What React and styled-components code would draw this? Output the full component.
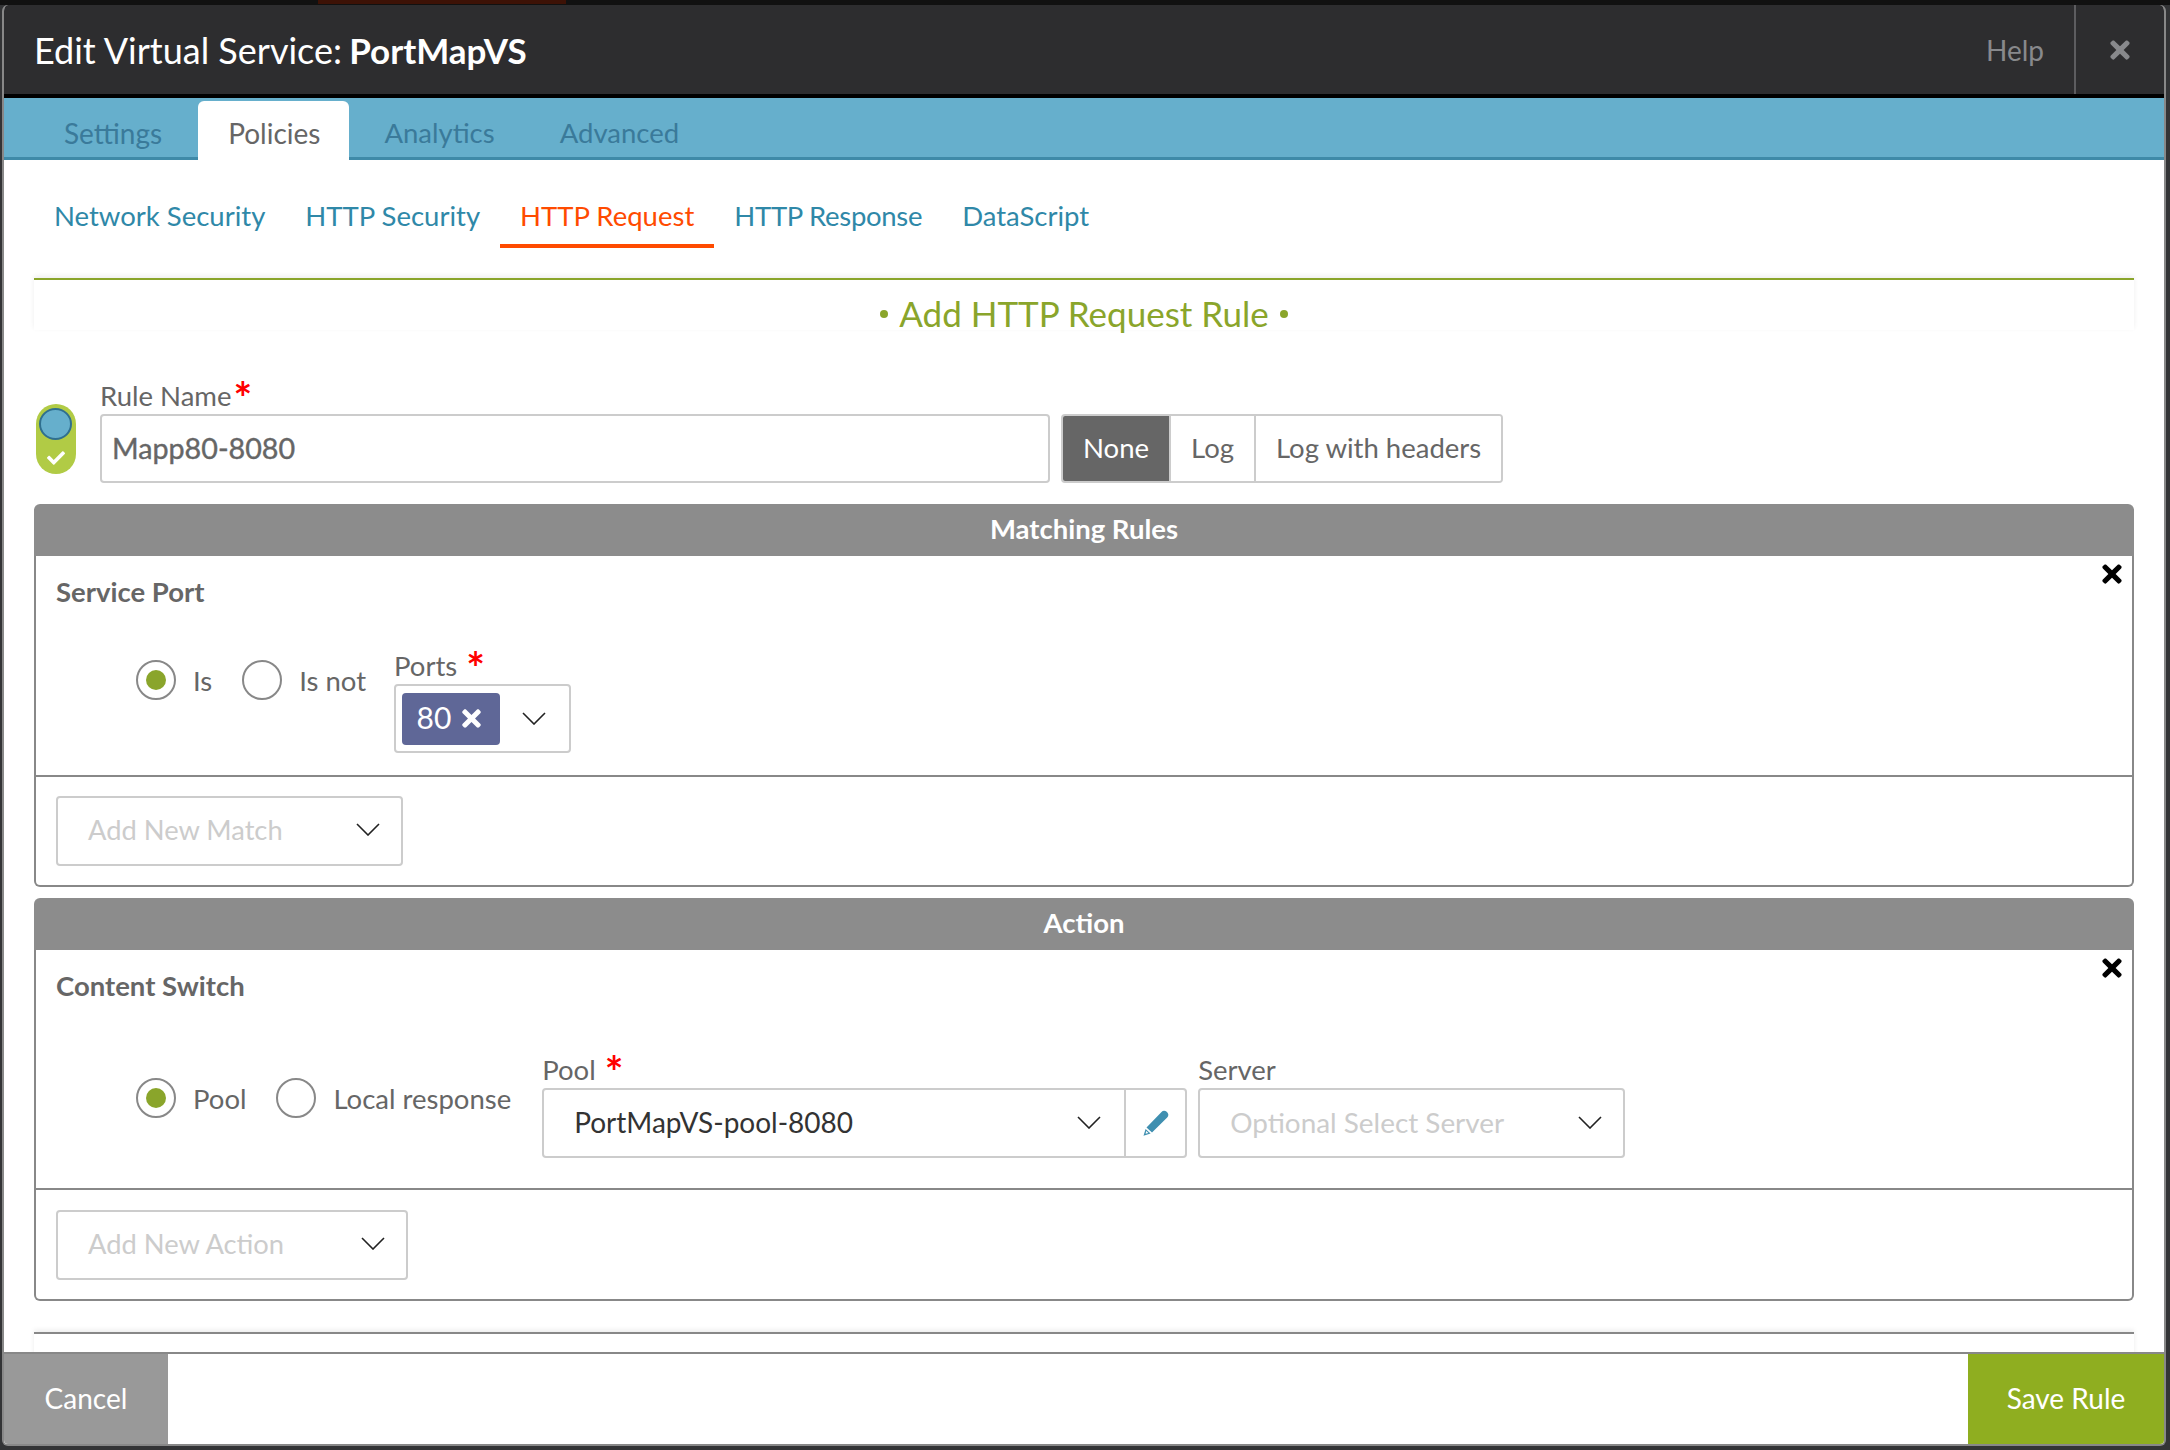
import React from 'react';
import styled, { createGlobalStyle } from 'styled-components';
import { FaTimes, FaCheck } from 'react-icons/fa';

const Global = createGlobalStyle`
  html, body { margin: 0; padding: 0; background: #333436; }
  * { box-sizing: border-box; }
  body { font-family: Lato, "Liberation Sans", sans-serif; color: #666; }
`;

const Page = styled.div`
  width: 2170px; height: 1450px; overflow: hidden; background: #333436;
`;
const TopStrip = styled.div`
  height: 5px; background: #111; padding-left: 318px;
`;
const StripMark = styled.div`
  width: 248px; height: 4px; background: #3d1206;
`;
const Modal = styled.div`
  margin-left: 2px; width: 2164px; height: 1441px;
  display: flex; flex-direction: column;
  background: #fff; border: solid #888; border-width: 0 2px 2px 2px;
  border-radius: 6px; overflow: hidden;
`;
const Header = styled.header`
  flex: none; height: 93px; background: #2d2d2f; border-bottom: 4px solid #000;
  display: flex; align-items: center; justify-content: space-between;
`;
const Title = styled.h1`
  margin: 0 0 0 30px; font-size: 36px; font-weight: 400; color: #fff;
  strong { font-size: 35px; font-weight: 700; margin-left: -2px; }
`;
const HeaderTools = styled.div`
  display: flex; align-items: stretch; height: 89px;
`;
const Help = styled.span`
  display: flex; align-items: center; padding-right: 30px;
  font-size: 28px; color: #88898c;
`;
const CloseBox = styled.span`
  width: 90px; display: flex; align-items: center; justify-content: center;
  border-left: 2px solid #5d5d60; color: #88898c; font-size: 28px;
`;
const Tabs = styled.nav`
  flex: none; height: 62px; background: #66afcc; border-bottom: 3px solid #3f8aa8;
  display: flex; align-items: flex-end; padding-left: 30px; gap: 5px;
`;
const Tab = styled.div`
  height: ${p => (p.$active ? '59px' : '56px')};
  padding: ${p => (p.$active ? '5px 29px 0 30px' : '7px 30px 0')}; display: flex; align-items: center;
  font-size: ${p => p.$size || 28}px; border-radius: 6px 6px 0 0;
  margin-bottom: ${p => (p.$active ? '-3px' : '0')};
  background: ${p => (p.$active ? '#fff' : 'transparent')};
  color: ${p => (p.$active ? '#666' : '#3a7a9a')};
  &:first-child { padding-right: 31px; }
`;
const Content = styled.main`
  flex: 1; min-height: 0; overflow: hidden; padding: 0 30px;
`;
const SubTabs = styled.div`
  height: 88px; display: flex; align-items: flex-end;
`;
const SubTab = styled.div`
  height: 66px; padding: 5px 20px 0; display: flex; align-items: center;
  font-size: 27.5px; letter-spacing: ${p => (p.$tight ? '-0.3px' : '0')};
  border-bottom: 4px solid ${p => (p.$active ? '#ff4b00' : 'transparent')};
  color: ${p => (p.$active ? '#ff4b00' : '#2f88a8')};
`;
const TitleBand = styled.div`
  margin-top: 30px; height: 52px; border-top: 2px solid #8aa52b;
  box-shadow: 0 -2px 5px rgba(0,0,0,.07);
  background: #fff; text-align: center;
`;
const FormTitle = styled.h2`
  margin: 0; display: flex; justify-content: center; align-items: center; gap: 11px;
  font-size: 35px; font-weight: 400; line-height: 66px; color: #8aa52b;
`;
const Bullet = styled.span`
  width: 8px; height: 8px; border-radius: 50%; background: #8aa52b; margin-top: 2px;
`;
const RuleRow = styled.div`
  display: flex; align-items: flex-end; height: 153px;
`;
const Toggle = styled.div`
  flex: none; position: relative; width: 40px; height: 70px; margin: 0 24px 9px 2px;
  border-radius: 20px; background: #b1cb45;
  color: #fff; font-size: 18px;
  display: flex; align-items: flex-end; justify-content: center; padding-bottom: 7px;
`;
const ToggleKnob = styled.span`
  position: absolute; left: 3px; top: 4px; width: 33px; height: 32px; border-radius: 50%;
  background: #66afcc; border: 2px solid #2f6f8f;
`;
const RuleField = styled.div`
  width: 950px;
`;
const Label = styled.div`
  height: 34px; padding-bottom: 3px; display: flex; align-items: center; font-size: 27.5px; color: #666;
`;
const Star = styled.span`
  color: #f00; font-weight: 700; font-size: 44px; line-height: 30px; height: 24px;
  margin-left: ${p => p.$gap}px; align-self: flex-start; padding-top: 2px;
`;
const TextInput = styled.div`
  height: 69px; border: 2px solid #ccc; border-radius: 4px; padding: 0 0 2px 10px;
  display: flex; align-items: center; font-size: 28.7px; color: #666; -webkit-text-stroke: .4px #666;
`;
const LogGroup = styled.div`
  margin-left: 11px; height: 69px; display: flex;
  border: 2px solid #ccc; border-radius: 4px; overflow: hidden;
`;
const LogOption = styled.div`
  height: 100%; padding: 0 20px 2px; display: flex; align-items: center; font-size: 27.5px;
  background: ${p => (p.$active ? '#666' : '#fff')};
  color: ${p => (p.$active ? '#fff' : '#666')};
  & + & { border-left: 2px solid #ccc; }
`;
const Panel = styled.section`
  margin-top: ${p => p.$top}px;
`;
const PanelHead = styled.div`
  height: 52px; padding-bottom: 3px; background: #8c8c8c; border-radius: 6px 6px 0 0;
  display: flex; align-items: center; justify-content: center;
  font-size: 27.5px; font-weight: 700; color: #fff;
`;
const PanelBody = styled.div`
  border: solid #888; border-width: 0 2px 2px 2px; border-radius: 0 0 6px 6px;
`;
const Section = styled.div`
  position: relative; padding: 20px 20px ${p => p.$bottom}px;
  border-bottom: 2px solid #888;
`;
const Remove = styled.span`
  position: absolute; right: 6px; top: 4px; color: #000; font-size: 28px; line-height: 0;
`;
const SectionTitle = styled.div`
  font-size: 27.5px; font-weight: 700; line-height: 32px; height: 34px; color: #666;
`;
const Controls = styled.div`
  display: flex; align-items: flex-start; padding-left: 80px; gap: 30px;
  margin-top: ${p => p.$top}px;
`;
const RadioOption = styled.div`
  display: flex; align-items: center; gap: 17px; height: 40px; font-size: 27.5px; color: #666;
  margin-top: ${p => p.$top}px;
`;
const RadioCircle = styled.span`
  width: 40px; height: 40px; border-radius: 50%; border: 2px solid #888;
  display: flex; align-items: center; justify-content: center;
  &::after {
    content: ''; width: 20px; height: 20px; border-radius: 50%;
    background: ${p => (p.$on ? '#8aa52b' : 'transparent')};
  }
`;
const PortsField = styled.div`
  margin-left: -2px;
`;
const Select = styled.div`
  height: ${p => p.$h || 69}px; width: ${p => p.$w}px; border: 2px solid #ccc; border-radius: 4px;
  display: flex; align-items: center; justify-content: space-between;
  padding: ${p => p.$pad};
  font-size: ${p => p.$size || 27.3}px; color: #ccc;
`;
const Chip = styled.span`
  width: 98px; height: 52px; padding-bottom: 3px; background: #5f6797; border-radius: 4px; color: #fff;
  display: flex; align-items: center; justify-content: center; gap: 7px; font-size: 30px;
  svg { font-size: 27px; margin-top: 3px; }
`;
const Chevron = styled.svg`
  width: 24px; height: 13px; flex: none; fill: none; stroke: #222; stroke-width: 1.6;
`;
const AddRow = styled.div`
  padding: ${p => p.$top}px 20px 19px;
`;
const ComboField = styled.div`
  display: flex; gap: 11px; margin-left: 1px;
`;
const PoolSelect = styled.div`
  width: 645px; height: 70px; border: 2px solid #ccc; border-radius: 4px; display: flex;
`;
const PoolValue = styled.div`
  flex: 1; display: flex; align-items: center; justify-content: space-between;
  padding: 0 23px 2px 30px; font-size: 28px; color: #333;
`;
const EditButton = styled.div`
  width: 61px; border-left: 2px solid #ccc;
  display: flex; align-items: center; justify-content: center;
`;
const PencilIcon = styled.svg`
  width: 26px; height: 26px; fill: #3f8fb0;
`;
const TailCard = styled.div`
  margin-top: 31px; height: 40px; border-top: 2px solid #888; box-shadow: 0 -2px 5px rgba(0,0,0,.08);
`;
const Footer = styled.footer`
  flex: none; height: 92px; border-top: 2px solid #888; background: #fff;
  display: flex; justify-content: space-between;
`;
const FootButton = styled.div`
  width: ${p => p.$w}px; padding-bottom: 2px; display: flex; align-items: center; justify-content: center;
  background: ${p => p.$bg}; color: #fff; font-size: 28px;
`;

const Arrow = () => (
  <Chevron viewBox="0 0 24 13"><polyline points="1,1 12,12 23,1" /></Chevron>
);

const Pencil = () => (
  <PencilIcon viewBox="0 0 26 26">
    <path d="M18.5 2 C20 0.3 22 0.3 24 2 C25.8 3.8 25.8 5.8 24.2 7.4 L9 22.5 L3.5 17.5 Z" />
    <path d="M2.6 19 L7.6 23.6 L0.5 25.8 Z M3.2 21 L2.6 23.8 L5.4 22.9 Z" fillRule="evenodd" />
  </PencilIcon>
);

export default function App() {
  return (
    <Page>
      <Global />
      <TopStrip><StripMark /></TopStrip>
      <Modal>
        <Header>
          <Title>Edit Virtual Service: <strong>PortMapVS</strong></Title>
          <HeaderTools>
            <Help>Help</Help>
            <CloseBox><FaTimes /></CloseBox>
          </HeaderTools>
        </Header>
        <Tabs>
          <Tab>Settings</Tab>
          <Tab $active>Policies</Tab>
          <Tab $size={27.5}>Analytics</Tab>
          <Tab $size={27.5}>Advanced</Tab>
        </Tabs>
        <Content>
          <SubTabs>
            <SubTab>Network Security</SubTab>
            <SubTab>HTTP Security</SubTab>
            <SubTab $active>HTTP Request</SubTab>
            <SubTab $tight>HTTP Response</SubTab>
            <SubTab>DataScript</SubTab>
          </SubTabs>
          <TitleBand>
            <FormTitle><Bullet />Add HTTP Request Rule<Bullet /></FormTitle>
          </TitleBand>
          <RuleRow>
            <Toggle><ToggleKnob /><FaCheck /></Toggle>
            <RuleField>
              <Label>Rule Name<Star $gap={2}>*</Star></Label>
              <TextInput>Mapp80-8080</TextInput>
            </RuleField>
            <LogGroup>
              <LogOption $active>None</LogOption>
              <LogOption>Log</LogOption>
              <LogOption>Log with headers</LogOption>
            </LogGroup>
          </RuleRow>
          <Panel $top={21}>
            <PanelHead>Matching Rules</PanelHead>
            <PanelBody>
              <Section $bottom={22}>
                <SectionTitle>Service Port</SectionTitle>
                <Remove><FaTimes /></Remove>
                <Controls $top={40}>
                  <RadioOption $top={10}><RadioCircle $on />Is</RadioOption>
                  <RadioOption $top={10}><RadioCircle />Is not</RadioOption>
                  <PortsField>
                    <Label>Ports<Star $gap={9}>*</Star></Label>
                    <Select $w={177} $pad="0 23px 0 6px">
                      <Chip>80<FaTimes /></Chip>
                      <Arrow />
                    </Select>
                  </PortsField>
                </Controls>
              </Section>
              <AddRow $top={19}>
                <Select $w={347} $h={70} $pad="0 21px 3px 30px">Add New Match<Arrow /></Select>
              </AddRow>
            </PanelBody>
          </Panel>
          <Panel $top={11}>
            <PanelHead>Action</PanelHead>
            <PanelBody>
              <Section $bottom={30}>
                <SectionTitle>Content Switch</SectionTitle>
                <Remove><FaTimes /></Remove>
                <Controls $top={50}>
                  <RadioOption $top={24}><RadioCircle $on />Pool</RadioOption>
                  <RadioOption $top={24}><RadioCircle />Local response</RadioOption>
                  <ComboField>
                    <div>
                      <Label>Pool<Star $gap={9}>*</Star></Label>
                      <PoolSelect>
                        <PoolValue>PortMapVS-pool-8080<Arrow /></PoolValue>
                        <EditButton><Pencil /></EditButton>
                      </PoolSelect>
                    </div>
                    <div>
                      <Label>Server</Label>
                      <Select $w={427} $h={70} $size={27.9} $pad="0 21px 2px 30px">Optional Select Server<Arrow /></Select>
                    </div>
                  </ComboField>
                </Controls>
              </Section>
              <AddRow $top={20}>
                <Select $w={352} $h={70} $pad="0 21px 3px 30px">Add New Action<Arrow /></Select>
              </AddRow>
            </PanelBody>
          </Panel>
          <TailCard />
        </Content>
        <Footer>
          <FootButton $w={164} $bg="#999">Cancel</FootButton>
          <FootButton $w={196} $bg="#8fae20">Save Rule</FootButton>
        </Footer>
      </Modal>
    </Page>
  );
}
